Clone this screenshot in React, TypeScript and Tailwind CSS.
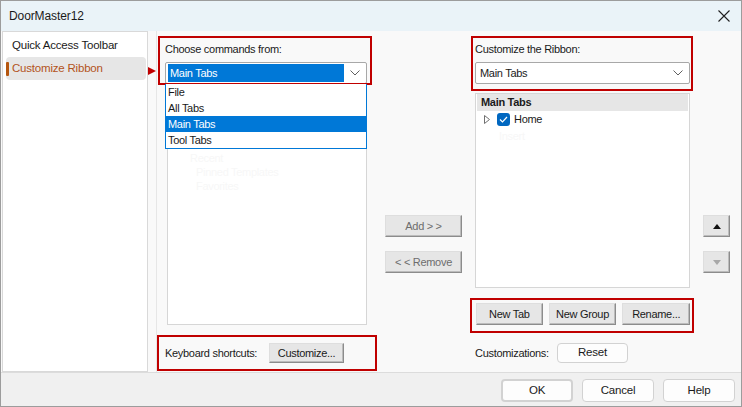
import type { ReactNode } from 'react'

const classicBtn =
  'flex items-center justify-center border border-t-[#dedede] border-l-[#dedede] border-r-[#8c8c8c] border-b-[#8c8c8c] bg-[#e6e6e6] text-[11px] tracking-[-0.3px] text-[#1a1a1a] shadow-[inset_-1px_-1px_0_#bcbcbc]'
const modernBtn =
  'flex items-center justify-center rounded-[4px] border border-[#d2d2d2] bg-[#fdfdfd] text-[11.5px] tracking-[-0.2px] text-[#1a1a1a]'
const txt = 'text-[11px] tracking-[-0.3px]'

function Chevron() {
  return (
    <svg width="10" height="6" viewBox="0 0 10 6" className="shrink-0">
      <polyline points="0.5,0.5 5,5 9.5,0.5" fill="none" stroke="#606060" strokeWidth="1" />
    </svg>
  )
}

function RedBox({ className }: { className: string }) {
  return <div className={`pointer-events-none absolute border-2 border-[#c00000] ${className}`} />
}

function Combo({ selected, children }: { selected?: boolean; children: ReactNode }) {
  return (
    <div className="flex h-[22px] items-center rounded-[2px] border border-[#a8a8a8] bg-white pl-[2px] pr-[6px]">
      <div
        className={`flex h-[18px] flex-1 items-center px-[2px] ${txt} ${
          selected ? 'bg-[#0078d7] text-white' : 'text-[#1a1a1a]'
        }`}
      >
        {children}
      </div>
      <div className="ml-[6px]">
        <Chevron />
      </div>
    </div>
  )
}

export default function App() {
  return (
    <div className="flex h-[407px] w-[742px] flex-col overflow-hidden border border-[#9c9c9c] bg-[#f9f9f9] font-['Liberation_Sans',Arial,sans-serif] text-[#1a1a1a]">
      {/* title bar */}
      <div className="flex h-[30px] shrink-0 items-center justify-between bg-[#eaf3f8] pl-[8px] pr-[11px]">
        <span className="text-[12px] tracking-[-0.1px]">DoorMaster12</span>
        <svg width="12" height="12" viewBox="0 0 12 12">
          <path d="M0.5 0.5 L11.5 11.5 M11.5 0.5 L0.5 11.5" stroke="#1f1f1f" strokeWidth="1.1" />
        </svg>
      </div>

      {/* body */}
      <div className="relative flex h-[341px] shrink-0">
        <div className="ml-[1px] flex h-full w-[146px] flex-col border border-[#d9d9d9] bg-white pt-[2px]">
          <div className="flex h-[23px] items-center pl-[9px] text-[11.5px] tracking-[-0.2px]">Quick Access Toolbar</div>
          <div className="relative ml-[3px] flex h-[23px] w-[140px] items-center rounded-[4px] bg-[#e6e6e6] pl-[6px] text-[11.5px] tracking-[-0.2px] text-[#b3531c]">
            <span className="absolute left-0 top-[5px] h-[14px] w-[3px] rounded-[1px] bg-[#b5560f]" />
            Customize Ribbon
          </div>
        </div>

        {/* red pointer */}
        <svg width="8" height="8" viewBox="0 0 8 8" className="absolute left-[147px] top-[36px]">
          <polygon points="0,0 8,4 0,8" fill="#c00000" />
        </svg>

        <div className="ml-[8px] flex flex-1 border-l border-[#e6e6e6] bg-[#f9f9f9] pl-[8px]">
          {/* left column */}
          <div className="flex w-[202px] flex-col">
            <div className="relative mt-[10px]">
              <div className={`flex h-[16px] items-center ${txt}`}>Choose commands from:</div>
              <div className="mt-[5px]">
                <Combo selected>Main Tabs</Combo>
              </div>
              <RedBox className="-left-[7px] -right-[5px] -top-[5px] -bottom-[1px]" />
              <div className={`absolute left-0 right-0 top-[43px] z-10 border border-t-0 border-[#0078d7] bg-white ${txt}`}>
                <div className="flex h-[16px] items-center pl-[2px]">File</div>
                <div className="flex h-[16px] items-center pl-[2px]">All Tabs</div>
                <div className="flex h-[16px] items-center bg-[#0078d7] pl-[2px] text-white">Main Tabs</div>
                <div className="flex h-[16px] items-center pl-[2px]">Tool Tabs</div>
              </div>
            </div>
            <div className={`ml-[2px] h-[241px] border border-[#d6d6d6] bg-white pl-[22px] pt-[66px] leading-[14px] text-[#f7f7f7] ${txt}`}>
              <div>Recent</div>
              <div className="pl-[6px]">Pinned Templates</div>
              <div className="pl-[6px]">Favorites</div>
            </div>
            <div className="relative mt-[18px] flex h-[20px] items-center">
              <span className={`w-[104px] ${txt}`}>Keyboard shortcuts:</span>
              <div className={`${classicBtn} h-[20px] w-[75px]`}>Customize...</div>
              <RedBox className="-left-[8px] -right-[10px] -top-[8px] -bottom-[8px]" />
            </div>
          </div>

          {/* middle column */}
          <div className="ml-[18px] flex w-[77px] flex-col gap-[14px] pt-[184px]">
            <div className={`${classicBtn} h-[22px] text-[#6d6d6d]`}>Add &gt; &gt;</div>
            <div className={`${classicBtn} h-[22px] text-[#6d6d6d]`}>&lt; &lt; Remove</div>
          </div>

          {/* right column */}
          <div className="ml-[13px] flex w-[215px] flex-col">
            <div className="relative mt-[10px]">
              <div className={`flex h-[16px] items-center ${txt}`}>Customize the Ribbon:</div>
              <div className="mt-[5px]">
                <Combo>Main Tabs</Combo>
              </div>
              <RedBox className="-left-[4px] -right-[3px] -top-[5px] -bottom-[7px]" />
            </div>
            <div className={`mt-[9px] h-[195px] border border-[#d6d6d6] bg-white px-[1px] ${txt}`}>
              <div className="flex h-[17px] items-center bg-[#e6e6e6] pl-[4px] font-bold">Main Tabs</div>
              <div className="flex h-[17px] items-center pl-[7px]">
                <svg width="6" height="9" viewBox="0 0 6 9">
                  <polygon points="0.5,0.5 5.5,4.5 0.5,8.5" fill="none" stroke="#707070" strokeWidth="1" />
                </svg>
                <div className="ml-[7px] flex h-[13px] w-[13px] items-center justify-center rounded-[3px] bg-[#0067c0]">
                  <svg width="9" height="7" viewBox="0 0 9 7">
                    <polyline points="1,3.5 3.5,6 8,1" fill="none" stroke="white" strokeWidth="1.2" />
                  </svg>
                </div>
                <span className="ml-[4px]">Home</span>
              </div>
              <div className="flex h-[17px] items-center pl-[22px] text-[#f7f7f7]">Insert</div>
            </div>
            <div className="relative mt-[15px] flex h-[22px] gap-[6px] pl-[1px]">
              <div className={`${classicBtn} w-[67px]`}>New Tab</div>
              <div className={`${classicBtn} w-[68px]`}>New Group</div>
              <div className={`${classicBtn} w-[68px]`}>Rename...</div>
              <RedBox className="-left-[5px] -right-[4px] -top-[5px] -bottom-[8px]" />
            </div>
            <div className="mt-[18px] flex h-[20px] items-center">
              <span className={`w-[82px] ${txt}`}>Customizations:</span>
              <div className={`${modernBtn} h-[20px] w-[71px]`}>Reset</div>
            </div>
          </div>

          {/* far right */}
          <div className="ml-[13px] flex w-[27px] flex-col gap-[14px] pt-[184px]">
            <div className={`${classicBtn} h-[22px]`}>
              <svg width="8" height="5" viewBox="0 0 8 5">
                <polygon points="0,5 4,0 8,5" fill="#111" />
              </svg>
            </div>
            <div className={`${classicBtn} h-[22px]`}>
              <svg width="8" height="5" viewBox="0 0 8 5">
                <polygon points="0,0 8,0 4,5" fill="#a8a8a8" />
              </svg>
            </div>
          </div>
        </div>
      </div>

      {/* footer */}
      <div className="flex flex-1 items-start justify-end gap-[9px] border-t border-[#dcdcdc] bg-[#f0f0f0] pr-[6px] pt-[6px]">
        <div className={`${modernBtn} h-[23px] w-[72px] border-2 border-[#005fb8]`}>OK</div>
        <div className={`${modernBtn} h-[23px] w-[72px]`}>Cancel</div>
        <div className={`${modernBtn} h-[23px] w-[72px]`}>Help</div>
      </div>
    </div>
  )
}
